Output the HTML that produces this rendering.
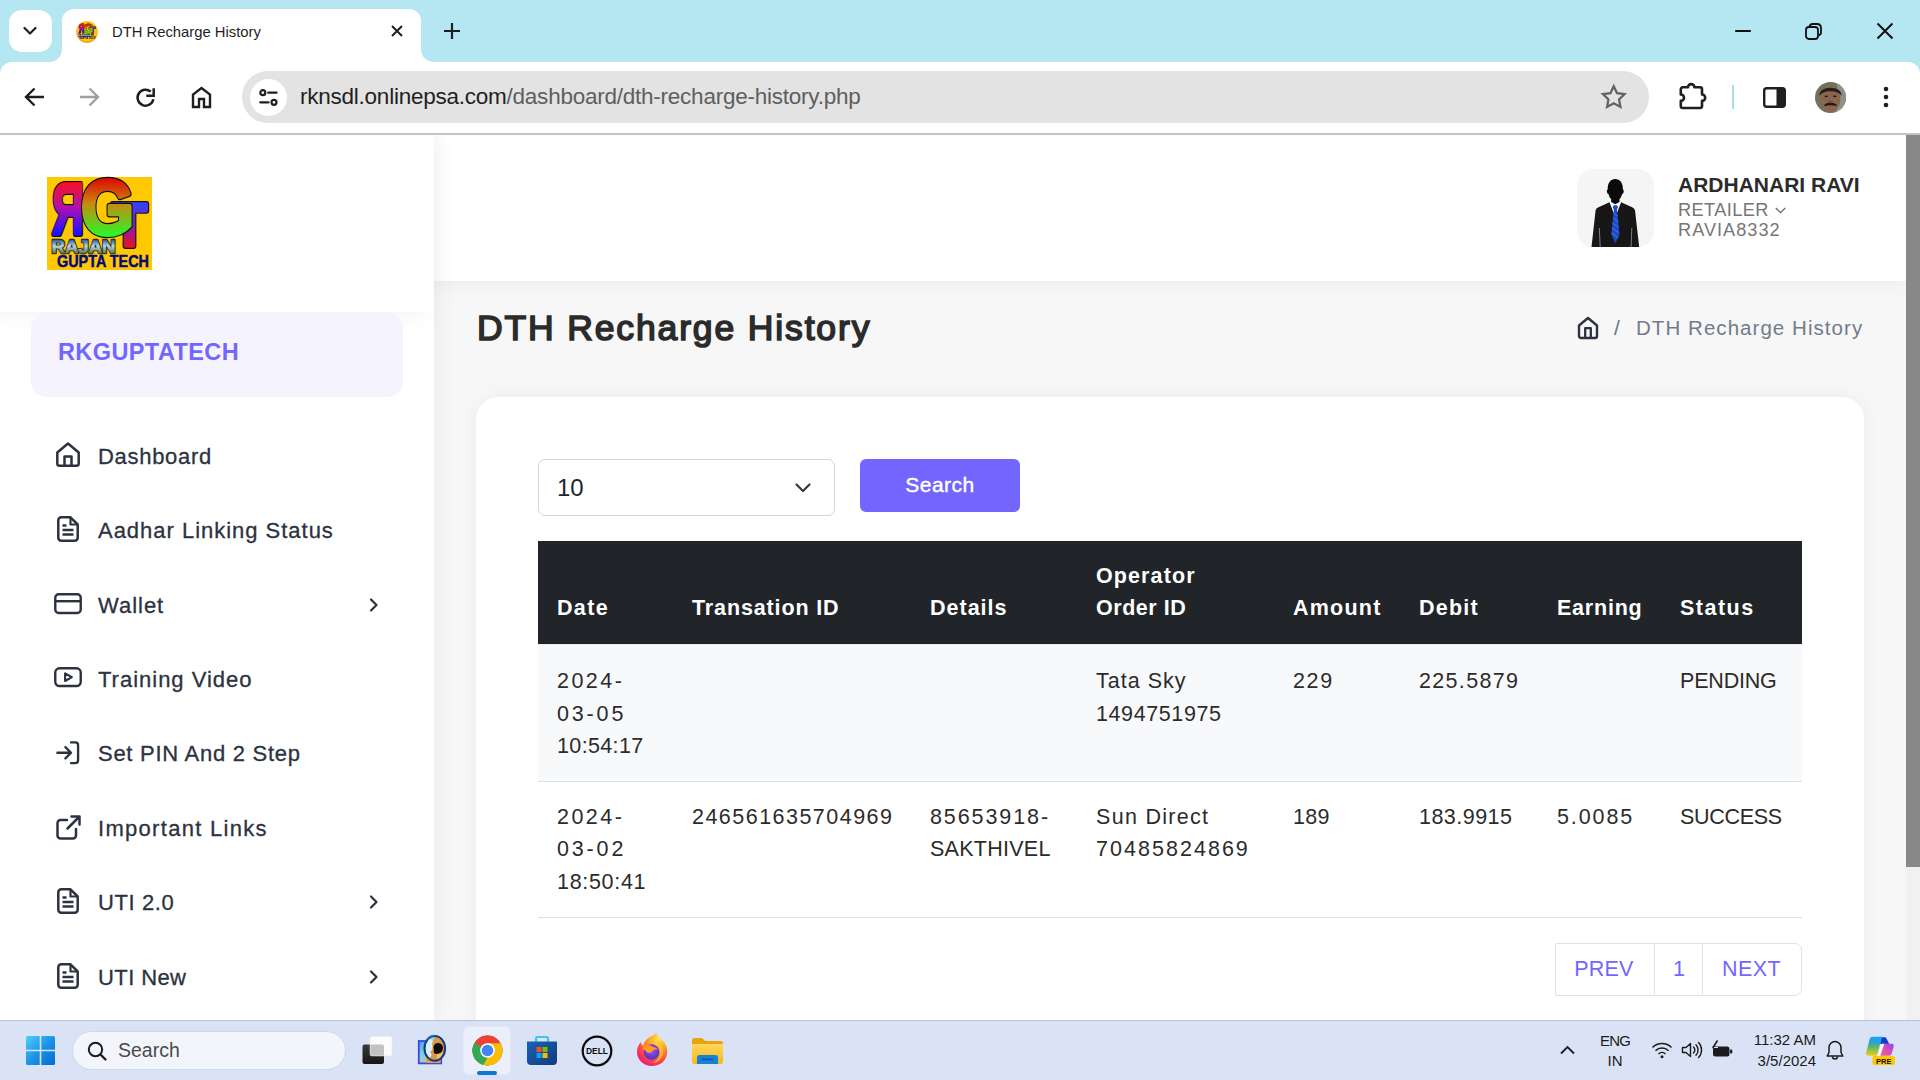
<!DOCTYPE html>
<html lang="en">
<head>
<meta charset="utf-8">
<title>DTH Recharge History</title>
<style>
*{box-sizing:border-box;margin:0;padding:0}
html,body{width:1920px;height:1080px;overflow:hidden;background:#fff;font-family:"Liberation Sans",sans-serif;color:#2b2b2b}
.abs{position:absolute}
svg{display:block;overflow:visible}
/* ---------- browser chrome ---------- */
#tabstrip{position:absolute;left:0;top:0;width:1920px;height:80px;background:#b5e7f3}
#tabsearch{position:absolute;left:9px;top:10px;width:43px;height:42px;border-radius:13px;background:#fff}
#tab{position:absolute;left:62px;top:9px;width:359px;height:53px;background:#fff;border-radius:12px 12px 0 0}
#tab:before,#tab:after{content:"";position:absolute;bottom:0;width:12px;height:12px;background:radial-gradient(circle at 0 0,transparent 11.5px,#fff 12px)}
#tab:before{left:-12px}
#tab:after{right:-12px;background:radial-gradient(circle at 100% 0,transparent 11.5px,#fff 12px)}
#tabtitle{position:absolute;left:50px;top:14.500px;font-size:14.8px;color:#1f1f1f;white-space:nowrap}
#toolbar{position:absolute;left:0;top:62px;width:1920px;height:71px;background:#fff;border-radius:12px 12px 0 0}
#toolbarline{position:absolute;left:0;top:133px;width:1920px;height:1.600px;background:#c4c4c4;z-index:5}
#omni{position:absolute;left:242px;top:71px;width:1407px;height:52px;border-radius:26px;background:#e3e3e3}
#siteinfo{position:absolute;left:250px;top:78.500px;width:37px;height:37px;border-radius:19px;background:#fff}
#url{position:absolute;left:300px;top:84px;font-size:22.500px;line-height:26px;white-space:nowrap;color:#1f1f1f;letter-spacing:-0.24px}
#url span{color:#5e5e5e}
/* ---------- page ---------- */
#page{position:absolute;left:0;top:134px;width:1906px;height:886px;background:#f7f7f7;overflow:hidden}
#sidebar{position:absolute;left:0;top:0;width:434px;height:886px;background:#fff;box-shadow:0 0 21px 0 rgba(89,102,122,.1)}
#logobox{position:absolute;left:0;top:0;width:434px;height:178px;background:#fff;box-shadow:-9px 0 20px rgba(89,102,122,.1)}
#brand{position:absolute;left:31px;top:179px;width:372px;height:84px;border-radius:15px;background:#f5f4fe}
#brand span{position:absolute;left:27px;top:26px;font-size:23.500px;line-height:27px;font-weight:700;color:#7366ff;letter-spacing:.4px;white-space:nowrap}
.mi{position:absolute;left:98px;font-size:22px;line-height:26px;color:#2c323f;white-space:nowrap;letter-spacing:.8px;-webkit-text-stroke:.3px #2c323f}
.ic{position:absolute}
.chev{position:absolute;left:368px}
#header{position:absolute;left:434px;top:0;width:1472px;height:147px;background:#fff;box-shadow:0 0 20px rgba(89,102,122,.1)}
#avatar{position:absolute;left:1143px;top:35px;width:77px;height:78px;border-radius:16px;background:#f5f5f5;overflow:hidden}
#uname{position:absolute;left:1244px;top:39px;font-size:21px;font-weight:700;color:#2b2b2b;white-space:nowrap}
#urole{position:absolute;left:1244px;top:66px;font-size:18.200px;line-height:20px;color:#767676;white-space:nowrap;letter-spacing:.4px}
#uid{position:absolute;left:1244px;top:86px;font-size:18.200px;line-height:20px;color:#767676;white-space:nowrap;letter-spacing:1px}
#ptitle{position:absolute;left:477px;top:174px;font-size:35.500px;font-weight:400;color:#2b2b2b;white-space:nowrap;letter-spacing:1.86px;-webkit-text-stroke:1.600px #2b2b2b}
#crumb{position:absolute;left:1636px;top:182px;font-size:20.500px;color:#727a8c;white-space:nowrap;letter-spacing:1.05px}
#crumbslash{position:absolute;left:1614px;top:182px;font-size:21px;color:#6c757d}
#card{position:absolute;left:476px;top:263px;width:1388px;height:700px;border-radius:22px;background:#fff;box-shadow:0 0 20px rgba(8,21,66,.05)}
#sel{position:absolute;left:538px;top:325px;width:297px;height:57px;border:1.5px solid #ced4da;border-radius:7px;background:#fff}
#sel span{position:absolute;left:18px;top:13.500px;font-size:24px;color:#212529}
#btn{position:absolute;left:860px;top:325px;width:160px;height:53px;border-radius:6px;background:#7366ff;color:#fff;font-size:21px;text-align:center;line-height:51px;letter-spacing:.5px;-webkit-text-stroke:.4px #fff}
#thead{position:absolute;left:538px;top:407px;width:1264px;height:103px;background:#212529}
.th{position:absolute;font-size:21.500px;line-height:26px;font-weight:700;color:#fff;white-space:nowrap}
#row1{position:absolute;left:538px;top:510px;width:1264px;height:138px;background:#f8f9fb;border-top:1px solid #e9edf3;border-bottom:1.5px solid #dee2e6}
#row2{position:absolute;left:538px;top:648px;width:1264px;height:136px;background:#fff;border-bottom:1.5px solid #dee2e6}
.td{position:absolute;font-size:21.500px;line-height:26px;color:#2b2b2b;white-space:nowrap}
#pager{position:absolute;left:1555px;top:809px;width:247px;height:53px;border:1.5px solid #dee2e6;border-radius:0 7px 7px 0;background:#fff}
#pager i{position:absolute;top:0;width:1.200px;height:51px;background:#dee2e6}
#pager span{position:absolute;top:13px;font-size:21.500px;color:#7366ff;letter-spacing:1.6px;white-space:nowrap}
/* ---------- scrollbar ---------- */
#sbar{position:absolute;left:1906px;top:134px;width:14px;height:886px;background:#f1f1f1}
#sthumb{position:absolute;left:0;top:0;width:14px;height:733px;background:#888}
/* ---------- taskbar ---------- */
#taskbar{position:absolute;left:0;top:1020px;width:1920px;height:60px;background:#dae3f6;border-top:1px solid #b9c0d0}
#tsearch{position:absolute;left:72px;top:9.500px;width:274px;height:39px;border-radius:20px;background:#f3f5fc;border:1px solid #cfd6e6}
#tsearch span{position:absolute;left:45px;top:7px;font-size:19.500px;color:#4a4a4a}
.tt{position:absolute;font-size:15px;color:#1b1b1b;white-space:nowrap}
</style>
</head>
<body>
<!-- ======= TAB STRIP ======= -->
<div id="tabstrip">
  <div id="tabsearch"><svg class="abs" style="left:14px;top:16px" width="14" height="10" viewBox="0 0 14 10"><path d="M1.5 2 7 7.5 12.5 2" fill="none" stroke="#1f1f1f" stroke-width="2.2" stroke-linecap="round" stroke-linejoin="round"/></svg></div>
  <div id="tab">
    <svg class="abs" style="left:14px;top:12px" width="22" height="22" viewBox="0 0 22 22"><defs><radialGradient id="fvg" cx=".5" cy=".45" r=".55"><stop offset="0" stop-color="#ffd400"/><stop offset=".8" stop-color="#ffc400"/><stop offset="1" stop-color="#f59a28"/></radialGradient><clipPath id="fvc"><circle cx="11" cy="11" r="10.600"/></clipPath></defs><circle cx="11" cy="11" r="10.900" fill="url(#fvg)"/><g clip-path="url(#fvc)"><use href="#rgt" transform="translate(1.800 2.300) scale(.175)"/></g></svg>
    <div id="tabtitle">DTH Recharge History</div>
    <svg class="abs" style="left:329px;top:16px" width="12" height="12" viewBox="0 0 12 12"><path d="M1 1l10 10M11 1 1 11" stroke="#1f1f1f" stroke-width="2" stroke-linecap="butt"/></svg>
  </div>
  <svg class="abs" style="left:444px;top:23px" width="16" height="16" viewBox="0 0 16 16"><path d="M8 0v16M0 8h16" stroke="#1f1f1f" stroke-width="2.2"/></svg>
  <svg class="abs" style="left:1735px;top:30px" width="16" height="2" viewBox="0 0 16 2"><rect width="16" height="2" rx=".8" fill="#111"/></svg>
  <svg class="abs" style="left:1805px;top:23px" width="17" height="17" viewBox="0 0 17 17"><rect x="1" y="4" width="12" height="12" rx="3" fill="none" stroke="#111" stroke-width="1.8"/><path d="M4.5 3.5C5 1.8 6 1 7.5 1H12c2.5 0 4 1.500 4 4v4.500c0 1.500-.8 2.500-2.500 3" fill="none" stroke="#111" stroke-width="1.8"/></svg>
  <svg class="abs" style="left:1877px;top:23px" width="16" height="16" viewBox="0 0 16 16"><path d="M0.500 .5l15 15M15.500 .5l-15 15" stroke="#111" stroke-width="2"/></svg>
</div>
<!-- ======= TOOLBAR ======= -->
<div id="toolbar"></div>
<div id="toolbarline"></div>
<svg class="abs" style="left:24px;top:87px" width="21" height="20" viewBox="0 0 21 20"><path d="M20 10H3M10.500 1.500 2 10l8.500 8.500" fill="none" stroke="#1f1f1f" stroke-width="2.4"/></svg>
<svg class="abs" style="left:79px;top:87px" width="21" height="20" viewBox="0 0 21 20"><path d="M1 10h17M10.500 1.500 19 10l-8.500 8.500" fill="none" stroke="#a0a0a0" stroke-width="2.4"/></svg>
<svg class="abs" style="left:135px;top:87px" width="21" height="21" viewBox="0 0 21 21"><path d="M18.400 12.300a8 8 0 1 1-2.600-7.700" fill="none" stroke="#1f1f1f" stroke-width="2.500"/><path d="M18.700 1.300v7.400h-7.400" fill="none" stroke="#1f1f1f" stroke-width="2.500"/></svg>
<svg class="abs" style="left:191px;top:86px" width="21" height="22" viewBox="0 0 21 22"><path d="M2 21V8.500L10.500 2 19 8.500V21h-6v-8H8v8z" fill="none" stroke="#1f1f1f" stroke-width="2.400" stroke-linejoin="miter"/></svg>
<div id="omni"></div>
<div id="siteinfo"><svg class="abs" style="left:8px;top:9px" width="22" height="19" viewBox="0 0 22 19"><circle cx="4.800" cy="4.700" r="2.500" fill="none" stroke="#1f1f1f" stroke-width="2.200"/><path d="M10.300 4.700h8.200" stroke="#1f1f1f" stroke-width="2.300" stroke-linecap="round"/><path d="M2.300 14.300h8.200" stroke="#1f1f1f" stroke-width="2.300" stroke-linecap="round"/><circle cx="16" cy="14.300" r="2.500" fill="none" stroke="#1f1f1f" stroke-width="2.200"/></svg></div>
<div id="url">rknsdl.onlinepsa.com<span>/dashboard/dth-recharge-history.php</span></div>
<svg class="abs" style="left:1600.500px;top:84px" width="25.500" height="24.500" viewBox="0 0 24 23"><path d="M12 2l3.100 6.600 7.100.900-5.200 5 1.300 7.100L12 18.100 5.700 21.600 7 14.500 1.800 9.500l7.100-.9z" fill="none" stroke="#5f6368" stroke-width="2.100" stroke-linejoin="miter"/></svg>
<svg class="abs" style="left:1679px;top:83px" width="28" height="27" viewBox="0 0 28 27"><path d="M1.800 6.300a2 2 0 0 1 2-2H9a3.200 3.200 0 0 1 6.400 0H21a2 2 0 0 1 2 2v5.200a3.200 3.200 0 0 1 0 6.400V23a2 2 0 0 1-2 2H3.800a2 2 0 0 1-2-2v-5.100a3.200 3.200 0 0 0 0-6.400z" fill="none" stroke="#1f1f1f" stroke-width="2.600" stroke-linejoin="round"/></svg>
<div class="abs" style="left:1732px;top:85px;width:2px;height:24px;background:#a8dcea"></div>
<svg class="abs" style="left:1763px;top:87px" width="23" height="21" viewBox="0 0 23 21"><rect x="1.200" y="1.200" width="20.600" height="18.600" rx="2.500" fill="none" stroke="#1f1f1f" stroke-width="2.400"/><rect x="13.500" y="1" width="8.500" height="19" fill="#1f1f1f"/></svg>
<svg class="abs" style="left:1815px;top:82px" width="31" height="31" viewBox="0 0 31 31"><defs><clipPath id="avc"><circle cx="15.500" cy="15.500" r="15.500"/></clipPath></defs><g clip-path="url(#avc)"><rect width="31" height="31" fill="#6f725f"/><rect x="22" y="0" width="9" height="31" fill="#8d9388"/><ellipse cx="15.500" cy="17" rx="10" ry="13.500" fill="#8a6650"/><path d="M4.500 14C3 3 28 3 26.500 14 24 7.500 7 7.500 4.500 14z" fill="#26201c"/><ellipse cx="11.300" cy="14.300" rx="1.800" ry=".9" fill="#2a1c16"/><ellipse cx="19.700" cy="14.300" rx="1.800" ry=".9" fill="#2a1c16"/><path d="M9.500 23.500c2-3 10-3 12 0-2-1.200-10-1.200-12 0z" fill="#1e1612" stroke="#1e1612" stroke-width="1.200"/><path d="M13 19.500h5" stroke="#6a4a38" stroke-width="1"/><path d="M20 31c1-3 5-4 9-3v3z" fill="#c8c8d0"/></g></svg>
<svg class="abs" style="left:1883px;top:86px" width="6" height="22" viewBox="0 0 6 22"><circle cx="3" cy="3" r="2.300" fill="#1f1f1f"/><circle cx="3" cy="11" r="2.300" fill="#1f1f1f"/><circle cx="3" cy="19" r="2.300" fill="#1f1f1f"/></svg>

<!-- ======= PAGE ======= -->
<div id="page">
  <!-- header -->
  <div id="header">
    <div id="avatar">
      <svg class="abs" style="left:0;top:0" width="77" height="78" viewBox="0 0 77 78">
        <path d="M33.500 33.500 38.300 32l4.800 1.500 1 8-5.800 8-5.800-8z" fill="#fff"/>
        <path d="M14.500 78 18.500 42c.3-2 1.500-3.300 3.500-4l10.500-4.800 5.800 15 5.800-15L54.600 38c2 .7 3.200 2 3.500 4L62.200 78z" fill="#171717"/>
        <path d="M30.700 20.500c-.2-6.500 3-10.500 7.600-10.500s7.800 4 7.600 10.500c.8.200 1 1.200.7 2.500-.3 1.400-.9 2.200-1.600 2.200-.5 2.300-1.400 3.800-2.500 4.800V33l-4.200 2.200L34.100 33v-3c-1.100-1-2-2.500-2.500-4.800-.7 0-1.300-.8-1.600-2.200-.3-1.300-.1-2.300.7-2.500z" fill="#0a0a0a"/>
        <path d="M36.700 36.300h3.400l1 2.200-1.200 2 2.600 25-4.100 8.700-4.100-8.700 2.600-25-1.200-2z" fill="#1d4bc9"/>
        <path d="M36.300 44l4.500 3M35.800 49l5.500 3.600M35.300 54l6.500 4.200M34.800 59l7.300 4.800M34.500 64l6.800 4.500" stroke="#4a7af0" stroke-width=".9"/>
        <path d="M22.300 59l.9 19M54.800 59l-.7 19" stroke="#9a9a9a" stroke-width="1" opacity=".8"/>
      </svg>
    </div>
    <div id="uname">ARDHANARI RAVI</div>
    <div id="urole">RETAILER <svg style="display:inline-block;vertical-align:2px;margin-left:1px" width="11" height="7" viewBox="0 0 11 7"><path d="M.8 1l4.700 4.600L10.200 1" fill="none" stroke="#6a6a6a" stroke-width="1.300"/></svg></div>
    <div id="uid">RAVIA8332</div>
  </div>
  <!-- body -->
  <div id="ptitle">DTH Recharge History</div>
  <svg class="abs" style="left:1577px;top:182px" width="22" height="24" viewBox="0 0 22 24"><path d="M2 9.500 11 2l9 7.500V20a2 2 0 0 1-2 2H4a2 2 0 0 1-2-2z" fill="none" stroke="#2c323f" stroke-width="2.400" stroke-linejoin="round"/><path d="M8.200 22v-9.800h5.600V22" fill="none" stroke="#2c323f" stroke-width="2.300" stroke-linejoin="round"/></svg>
  <div id="crumbslash">/</div>
  <div id="crumb">DTH Recharge History</div>
  <div id="card"></div>
  <div id="sel"><span>10</span><svg class="abs" style="left:256px;top:23px" width="16" height="10" viewBox="0 0 16 10"><path d="M1.500 1.500 8 8l6.500-6.500" fill="none" stroke="#343a40" stroke-width="2.200" stroke-linecap="round" stroke-linejoin="round"/></svg></div>
  <div id="btn">Search</div>
  <div id="thead"></div>
  <div id="row1"></div>
  <div id="row2"></div>
  <div class="th" style="left:557px;top:460.5px;letter-spacing:1.33px">Date</div>
  <div class="th" style="left:692px;top:460.5px;letter-spacing:0.87px">Transation ID</div>
  <div class="th" style="left:930px;top:460.5px;letter-spacing:1.00px">Details</div>
  <div class="th" style="left:1096px;top:428.5px;letter-spacing:1.10px">Operator</div>
  <div class="th" style="left:1096px;top:460.5px;letter-spacing:0.52px">Order ID</div>
  <div class="th" style="left:1293px;top:460.5px;letter-spacing:1.22px">Amount</div>
  <div class="th" style="left:1419px;top:460.5px;letter-spacing:1.21px">Debit</div>
  <div class="th" style="left:1557px;top:460.5px;letter-spacing:0.78px">Earning</div>
  <div class="th" style="left:1680px;top:460.5px;letter-spacing:1.50px">Status</div>
  <div class="td" style="left:557px;top:533.5px;letter-spacing:2.48px">2024-</div>
  <div class="td" style="left:557px;top:567px;letter-spacing:2.85px">03-05</div>
  <div class="td" style="left:557px;top:598.5px;letter-spacing:0.36px">10:54:17</div>
  <div class="td" style="left:1096px;top:533.5px;letter-spacing:1.02px">Tata Sky</div>
  <div class="td" style="left:1096px;top:567px;letter-spacing:0.60px">1494751975</div>
  <div class="td" style="left:1293px;top:533.5px;letter-spacing:1.66px">229</div>
  <div class="td" style="left:1419px;top:533.5px;letter-spacing:1.33px">225.5879</div>
  <div class="td" style="left:1680px;top:533.5px;letter-spacing:-0.19px">PENDING</div>
  <div class="td" style="left:557px;top:669.5px;letter-spacing:2.48px">2024-</div>
  <div class="td" style="left:557px;top:702px;letter-spacing:2.85px">03-02</div>
  <div class="td" style="left:557px;top:734.5px;letter-spacing:0.69px">18:50:41</div>
  <div class="td" style="left:692px;top:669.5px;letter-spacing:1.47px">246561635704969</div>
  <div class="td" style="left:930px;top:669.5px;letter-spacing:1.91px">85653918-</div>
  <div class="td" style="left:930px;top:702px;letter-spacing:0.26px">SAKTHIVEL</div>
  <div class="td" style="left:1096px;top:669.5px;letter-spacing:1.29px">Sun Direct</div>
  <div class="td" style="left:1096px;top:702px;letter-spacing:2.03px">70485824869</div>
  <div class="td" style="left:1293px;top:669.5px;letter-spacing:0.26px">189</div>
  <div class="td" style="left:1419px;top:669.5px;letter-spacing:0.47px">183.9915</div>
  <div class="td" style="left:1557px;top:669.5px;letter-spacing:1.89px">5.0085</div>
  <div class="td" style="left:1680px;top:669.5px;letter-spacing:-0.31px">SUCCESS</div>
  <div id="pager"><i style="left:98px"></i><i style="left:146px"></i><span style="left:18.200px;letter-spacing:.2px">PREV</span><span style="left:117px">1</span><span style="left:166px;letter-spacing:.4px">NEXT</span></div>

  <!-- sidebar -->
  <div id="sidebar">
    <div id="logobox">
      <svg class="abs" style="left:47px;top:43px" width="105" height="93" viewBox="0 0 105 93">
        <defs>
          <linearGradient id="gR" gradientUnits="userSpaceOnUse" x1="0" y1="4" x2="0" y2="57"><stop offset="0" stop-color="#ff1018"/><stop offset=".5" stop-color="#b010b0"/><stop offset="1" stop-color="#1a10ff"/></linearGradient>
          <linearGradient id="gG" gradientUnits="userSpaceOnUse" x1="0" y1="0" x2="0" y2="59"><stop offset="0" stop-color="#e00000"/><stop offset=".45" stop-color="#c88a10"/><stop offset="1" stop-color="#28f828"/></linearGradient>
          <linearGradient id="gT" gradientUnits="userSpaceOnUse" x1="0" y1="24" x2="0" y2="70"><stop offset="0" stop-color="#2a48ff"/><stop offset=".5" stop-color="#7a20c0"/><stop offset="1" stop-color="#e81028"/></linearGradient>
          <linearGradient id="gJ" gradientUnits="userSpaceOnUse" x1="0" y1="62" x2="0" y2="76"><stop offset="0" stop-color="#1a4a8a"/><stop offset=".5" stop-color="#b8d8f0"/><stop offset="1" stop-color="#6a7a40"/></linearGradient>
        </defs>
        <rect width="105" height="93" fill="#ffc800"/>
        <g id="rgt" font-family="Liberation Sans, sans-serif" font-weight="700" stroke-linejoin="round">
          <g transform="translate(37 0) scale(-1 1)"><text x="0" y="56.500" font-size="72" textLength="32" lengthAdjust="spacingAndGlyphs" fill="#111" stroke="#111" stroke-width="6">R</text><text x="0" y="56.500" font-size="72" textLength="32" lengthAdjust="spacingAndGlyphs" fill="url(#gR)" stroke="url(#gR)" stroke-width="3.400">R</text></g>
          <text x="65" y="69" font-size="62" textLength="35" lengthAdjust="spacingAndGlyphs" fill="#111" stroke="#111" stroke-width="6">T</text><text x="65" y="69" font-size="62" textLength="35" lengthAdjust="spacingAndGlyphs" fill="url(#gT)" stroke="url(#gT)" stroke-width="3.600">T</text>
          <text x="34" y="57" font-size="78" textLength="53" lengthAdjust="spacingAndGlyphs" fill="#111" stroke="#111" stroke-width="6.500">G</text><text x="34" y="57" font-size="78" textLength="53" lengthAdjust="spacingAndGlyphs" fill="url(#gG)" stroke="url(#gG)" stroke-width="4">G</text>
          <text x="4.500" y="75.500" font-size="18" textLength="64" lengthAdjust="spacingAndGlyphs" fill="#111" stroke="#111" stroke-width="2.400">RAJAN</text><text x="4.500" y="75.500" font-size="18" textLength="64" lengthAdjust="spacingAndGlyphs" fill="url(#gJ)" stroke="url(#gJ)" stroke-width=".8">RAJAN</text>
          <text x="10" y="90" font-size="16.500" fill="#080878" stroke="#080878" stroke-width=".5" textLength="92" lengthAdjust="spacingAndGlyphs">GUPTA TECH</text>
        </g>
      </svg>
    </div>
    <div id="brand"><span>RKGUPTATECH</span></div>

    <svg class="ic" style="left:56px;top:308px" width="24" height="25" viewBox="0 0 24 25"><path d="M1.300 10.500 12 1.500l10.700 9v11a2.300 2.300 0 0 1-2.300 2.300H3.600a2.300 2.300 0 0 1-2.300-2.300z" fill="none" stroke="#2c323f" stroke-width="2.500" stroke-linejoin="round"/><path d="M8.500 23.500v-9h7v9" fill="none" stroke="#2c323f" stroke-width="2.500" stroke-linejoin="round"/></svg>
    <div class="mi" style="top:310px;letter-spacing:0.7px">Dashboard</div>

    <svg class="ic docic" style="left:57px;top:382px" width="22" height="26" viewBox="0 0 22 26"><use href="#doc"/></svg>
    <div class="mi" style="top:384px;letter-spacing:0.98px">Aadhar Linking Status</div>

    <svg class="ic" style="left:54px;top:458.500px" width="28" height="22.200" viewBox="0 0 29 23"><rect x="1.300" y="1.300" width="26.400" height="19.400" rx="3.500" fill="none" stroke="#2c323f" stroke-width="2.500"/><path d="M1.500 8.500h26" stroke="#2c323f" stroke-width="2.500"/></svg>
    <div class="mi" style="top:459px;letter-spacing:0.98px">Wallet</div>
    <svg class="chev" style="top:463px" width="12" height="16" viewBox="0 0 12 16"><path d="M3 2.500 8.500 8 3 13.500" fill="none" stroke="#2c323f" stroke-width="2.200" stroke-linecap="round" stroke-linejoin="round"/></svg>

    <svg class="ic" style="left:54px;top:533px" width="28" height="21.300" viewBox="0 0 29 22"><rect x="1.300" y="1.300" width="26.400" height="18.400" rx="4.500" fill="none" stroke="#2c323f" stroke-width="2.500"/><path d="M11.500 6.500v8l7-4z" fill="none" stroke="#2c323f" stroke-width="2.200" stroke-linejoin="round"/></svg>
    <div class="mi" style="top:533px;letter-spacing:0.99px">Training Video</div>

    <svg class="ic" style="left:56px;top:606.500px" width="23.500" height="23.500" viewBox="0 0 25 25"><path d="M1.500 12.500h14M10 6.500l6 6-6 6" fill="none" stroke="#2c323f" stroke-width="2.500" stroke-linecap="round" stroke-linejoin="round"/><path d="M16 1.500h4.500a3 3 0 0 1 3 3v16a3 3 0 0 1-3 3H16" fill="none" stroke="#2c323f" stroke-width="2.500" stroke-linecap="round" stroke-linejoin="round"/></svg>
    <div class="mi" style="top:607px;letter-spacing:0.73px">Set PIN And 2 Step</div>

    <svg class="ic" style="left:56px;top:681px" width="25" height="25" viewBox="0 0 25 25"><path d="M20 14v6.500a3 3 0 0 1-3 3H4.500a3 3 0 0 1-3-3V8a3 3 0 0 1 3-3H11" fill="none" stroke="#2c323f" stroke-width="2.500" stroke-linecap="round" stroke-linejoin="round"/><path d="M15.500 1.500h8v8M23 2 11.500 13.500" fill="none" stroke="#2c323f" stroke-width="2.500" stroke-linecap="round" stroke-linejoin="round"/></svg>
    <div class="mi" style="top:682px;letter-spacing:1.3px">Important Links</div>

    <svg class="ic docic" style="left:57px;top:754px" width="22" height="26" viewBox="0 0 22 26"><use href="#doc"/></svg>
    <div class="mi" style="top:756px;letter-spacing:0.6px">UTI 2.0</div>
    <svg class="chev" style="top:760px" width="12" height="16" viewBox="0 0 12 16"><path d="M3 2.500 8.500 8 3 13.500" fill="none" stroke="#2c323f" stroke-width="2.200" stroke-linecap="round" stroke-linejoin="round"/></svg>

    <svg class="ic docic" style="left:57px;top:829px" width="22" height="26" viewBox="0 0 22 26"><use href="#doc"/></svg>
    <div class="mi" style="top:831px;letter-spacing:0.4px">UTI New</div>
    <svg class="chev" style="top:835px" width="12" height="16" viewBox="0 0 12 16"><path d="M3 2.500 8.500 8 3 13.500" fill="none" stroke="#2c323f" stroke-width="2.200" stroke-linecap="round" stroke-linejoin="round"/></svg>
  </div>
  <svg width="0" height="0" style="position:absolute"><defs><g id="doc"><path d="M13.500 1.300H4.300a3 3 0 0 0-3 3v17.400a3 3 0 0 0 3 3h13.400a3 3 0 0 0 3-3V8.500z" fill="none" stroke="#2c323f" stroke-width="2.500" stroke-linejoin="round"/><path d="M13.500 1.300v7.200h7.200" fill="none" stroke="#2c323f" stroke-width="2.200" stroke-linejoin="round"/><path d="M5.500 9.500h4M5.500 14h11M5.500 18.500h11" stroke="#2c323f" stroke-width="2.300"/></g></defs></svg>
</div>

<!-- ======= SCROLLBAR ======= -->
<div id="sbar"><div id="sthumb"></div></div>

<!-- ======= TASKBAR ======= -->
<div id="taskbar">
  <!-- windows logo -->
  <svg class="abs" style="left:26px;top:15px" width="29" height="29" viewBox="0 0 29 29"><defs><linearGradient id="wg" x1="0" y1="0" x2="1" y2="1"><stop offset="0" stop-color="#4fd0fb"/><stop offset=".5" stop-color="#1b94e6"/><stop offset="1" stop-color="#0669cc"/></linearGradient></defs><path d="M0 1.500A1.500 1.500 0 0 1 1.500 0H13.700V13.700H0zM15.300 0H27.500A1.500 1.500 0 0 1 29 1.500V13.700H15.300zM0 15.300H13.700V29H1.500A1.500 1.500 0 0 1 0 27.500zM15.300 15.300H29V27.500A1.500 1.500 0 0 1 27.500 29H15.300z" fill="url(#wg)"/></svg>
  <div id="tsearch"><svg class="abs" style="left:14px;top:9px" width="20" height="20" viewBox="0 0 20 20"><circle cx="8.500" cy="8.500" r="6.700" fill="none" stroke="#1b1b1b" stroke-width="2"/><path d="M13.500 13.500 18.500 18.500" stroke="#1b1b1b" stroke-width="2.400" stroke-linecap="round"/></svg><span>Search</span></div>
  <!-- task view -->
  <svg class="abs" style="left:362px;top:15px" width="31" height="29" viewBox="0 0 31 29"><defs><linearGradient id="tv1" x1="0" y1="0" x2="0" y2="1"><stop offset="0" stop-color="#3a3a3a"/><stop offset="1" stop-color="#151515"/></linearGradient></defs><rect x="0.500" y="8.500" width="21.500" height="19.500" rx="2" fill="url(#tv1)"/><rect x="8" y="0.500" width="22" height="19.500" rx="2" fill="#fcfcfc" stroke="#e8ebf2" stroke-width=".5"/><path d="M8.300 8.500H20a2 2 0 0 1 2 2V19.700H10.300a2 2 0 0 1-2-2z" fill="#c2c2c2"/></svg>
  <!-- photo app -->
  <svg class="abs" style="left:417px;top:13px" width="31" height="32" viewBox="0 0 31 32"><defs><clipPath id="pr"><ellipse cx="17.800" cy="14.400" rx="10" ry="12"/></clipPath><linearGradient id="psky" x1="0" y1="0" x2="0" y2="1"><stop offset="0" stop-color="#48a8e0"/><stop offset=".6" stop-color="#7fd0e8"/><stop offset="1" stop-color="#b8c8b0"/></linearGradient></defs><rect x="1.800" y="7" width="22.400" height="22.400" fill="url(#psky)" stroke="#3a48e0" stroke-width="1.800"/><path d="M9 29V22l8-4h6.500v11z" fill="#e0a048"/><g clip-path="url(#pr)"><rect x="6" y="0" width="24" height="28" fill="#8fd8f0"/><path d="M9 6c3-2 6-1 8 2l-2 20H8z" fill="#d8f0f8"/><path d="M19 1c6 1 10 6 10 13s-4 12-11 12c-3 0-5-1-6-2 3-2 3-4 1-6 3-2 3-5 2-8 1-3 2-6 4-9z" fill="#d89a4a"/><path d="M18 10c3-2 7-1 8 3 0 4-2 7-6 7-3 0-4-2-3-4-1-2-1-4 1-6z" fill="#140c08"/><path d="M20 20c3 0 5-1 6-3 0 4-2 7-6 8z" fill="#f0c070"/></g><ellipse cx="17.800" cy="14.400" rx="10.300" ry="12.300" fill="none" stroke="#123a7c" stroke-width="2"/><path d="M9 6.500a10.300 12.300 0 0 1 8.800-5.200" fill="none" stroke="#3a78c8" stroke-width="1.200"/></svg>
  <!-- chrome highlight -->
  <div class="abs" style="left:463px;top:5px;width:48px;height:49px;border-radius:6px;background:#eaeffb;border:1px solid #e3e8f4"></div>
  <div class="abs" style="left:477px;top:50px;width:20px;height:4px;border-radius:2px;background:#0a78d4"></div>
  <svg class="abs" style="left:471.500px;top:14px" width="31" height="31" viewBox="0 0 32 32"><defs><clipPath id="cc"><circle cx="16" cy="16" r="15.500"/></clipPath></defs><g clip-path="url(#cc)"><rect width="32" height="32" fill="#ea4335"/><path d="M16 16 2.200 8-4 20 10 40z" fill="#34a853"/><path d="M16 16 9 28.200 14 40 40 40 40 16z" fill="#34a853"/><path d="M16 16h20v24H8z" fill="#fbbc04"/><path d="M16 16 2.600 8.200 0 16 4 28 9.100 28z" fill="#34a853"/><path d="M2.600 8.200 16 16l0-7.500 14-.3L24 -2 6 0z" fill="#ea4335"/><path d="M16 8.500h14.500L36 20 22 36l-13 .0L16 23.500z" fill="#fbbc04"/><path d="M9.500 12.200 2.600 8.200-2 18 6 32l3 4 7-12.500z" fill="#34a853"/></g><circle cx="16" cy="16" r="7.600" fill="#fff"/><circle cx="16" cy="16" r="6" fill="#4285f4"/></svg>
  <!-- store -->
  <svg class="abs" style="left:527px;top:14px" width="30" height="31" viewBox="0 0 30 31"><defs><linearGradient id="sg" x1="0" y1="0" x2="1" y2="1"><stop offset="0" stop-color="#1763b8"/><stop offset="1" stop-color="#163a78"/></linearGradient></defs><path d="M9 7V3.500A1.500 1.500 0 0 1 10.500 2h9A1.500 1.500 0 0 1 21 3.500V7" fill="none" stroke="#3fc2f5" stroke-width="2.200"/><path d="M0 6.500h30V26a4 4 0 0 1-4 4H4a4 4 0 0 1-4-4z" fill="url(#sg)"/><rect x="9.500" y="12" width="5" height="5" fill="#f25022"/><rect x="15.500" y="12" width="5" height="5" fill="#7fba00"/><rect x="9.500" y="18" width="5" height="5" fill="#00a4ef"/><rect x="15.500" y="18" width="5" height="5" fill="#ffb900"/></svg>
  <!-- dell -->
  <svg class="abs" style="left:581px;top:14px" width="32" height="32" viewBox="0 0 32 32"><circle cx="16" cy="16" r="14.300" fill="none" stroke="#0b0b0b" stroke-width="2.200"/><text x="16" y="19.300" text-anchor="middle" font-family="Liberation Sans, sans-serif" font-weight="700" font-size="9" fill="#0b0b0b" textLength="22" lengthAdjust="spacingAndGlyphs">DELL</text></svg>
  <!-- firefox -->
  <svg class="abs" style="left:636px;top:12px" width="32" height="34" viewBox="0 0 32 34"><defs><radialGradient id="fg" cx=".7" cy=".2" r=".9"><stop offset="0" stop-color="#ffe94a"/><stop offset=".35" stop-color="#ffa21f"/><stop offset=".7" stop-color="#ff4a3d"/><stop offset="1" stop-color="#e31587"/></radialGradient><radialGradient id="fp" cx=".5" cy=".4" r=".6"><stop offset="0" stop-color="#9059ff"/><stop offset="1" stop-color="#5b2bbd"/></radialGradient></defs><path d="M16 3c2-1 3-2 4-3 1 3 4 5 6 7 4 4 6 8 5 14-1 7-7 12-15 12S1 27 1 19c0-5 2-8 4-10 0 2 1 3 2 4 1-4 4-8 9-10z" fill="url(#fg)"/><circle cx="15.500" cy="19" r="7.800" fill="url(#fp)"/><path d="M8 13c3-2 7-1 9 1 2 0 4 1 5 3-3-1-5 0-6 2-2 2-6 1-7-2-2 0-3-2-1-4z" fill="#ff9a2a"/><path d="M21 7c3 2 6 6 6 12 0 6-5 11-11 11 6-2 9-7 8-13-1-4-2-7-3-10z" fill="#ffbd3a" opacity=".9"/></svg>
  <!-- explorer -->
  <svg class="abs" style="left:692px;top:16px" width="31" height="28" viewBox="0 0 31 28"><defs><linearGradient id="eg" x1="0" y1="0" x2="0" y2="1"><stop offset="0" stop-color="#ffd75a"/><stop offset="1" stop-color="#f4b81c"/></linearGradient></defs><path d="M0 3.500A2.500 2.500 0 0 1 2.500 1H10l3 3h15.500A2.500 2.500 0 0 1 31 6.500V10H0z" fill="#e8a410"/><path d="M0 7h31v17.500a2.500 2.500 0 0 1-2.500 2.500h-26A2.500 2.500 0 0 1 0 24.500z" fill="url(#eg)"/><path d="M5 27v-6.500A2.500 2.500 0 0 1 7.500 18h16a2.500 2.500 0 0 1 2.500 2.500V27z" fill="#1582d8"/><rect x="9.500" y="21.500" width="12" height="1.800" rx=".9" fill="#0c5aa8"/></svg>
  <!-- tray -->
  <svg class="abs" style="left:1560px;top:24px" width="15" height="10" viewBox="0 0 15 10"><path d="M1 8.500 7.500 2 14 8.500" fill="none" stroke="#1b1b1b" stroke-width="1.800"/></svg>
  <div class="tt" style="left:1600px;top:11px;width:30px;text-align:center;letter-spacing:-.9px">ENG</div>
  <div class="tt" style="left:1600px;top:31px;width:30px;text-align:center">IN</div>
  <svg class="abs" style="left:1651px;top:20px" width="22" height="18" viewBox="0 0 22 18"><path d="M1.500 6.500a13.500 13.500 0 0 1 19 0" fill="none" stroke="#1b1b1b" stroke-width="1.500"/><path d="M4.500 9.800a9.200 9.200 0 0 1 13 0" fill="none" stroke="#1b1b1b" stroke-width="1.500"/><path d="M7.500 13a5 5 0 0 1 7 0" fill="none" stroke="#1b1b1b" stroke-width="1.500"/><circle cx="11" cy="15.800" r="1.500" fill="#1b1b1b"/></svg>
  <svg class="abs" style="left:1681px;top:20px" width="22" height="18" viewBox="0 0 22 18"><path d="M1.500 6.500h3.500l4.500-4v13l-4.500-4H1.500z" fill="none" stroke="#1b1b1b" stroke-width="1.400" stroke-linejoin="round"/><path d="M12.500 6a4.500 4.500 0 0 1 0 6M15 3.800a7.600 7.600 0 0 1 0 10.400M17.600 1.500a11 11 0 0 1 0 15" fill="none" stroke="#1b1b1b" stroke-width="1.400" stroke-linecap="round"/></svg>
  <svg class="abs" style="left:1711px;top:19px" width="22" height="18" viewBox="0 0 22 18"><rect x="2" y="6.500" width="16.500" height="10" rx="2.500" fill="#1b1b1b"/><rect x="19" y="9.500" width="2.300" height="4" rx="1" fill="#1b1b1b"/><path d="M6.500 0.500 2 7.500h3.500L4 12" fill="none" stroke="#1b1b1b" stroke-width="1.600" stroke-linejoin="round"/><path d="M3 7.500h4" stroke="#dae3f6" stroke-width="1"/></svg>
  <div class="tt" style="left:1716px;top:10px;width:100px;text-align:right">11:32 AM</div>
  <div class="tt" style="left:1716px;top:31px;width:100px;text-align:right">3/5/2024</div>
  <svg class="abs" style="left:1826px;top:19px" width="18" height="21" viewBox="0 0 18 21"><path d="M9 1.500a6 6 0 0 1 6 6v5l1.800 3.500H1.200L3 12.500v-5a6 6 0 0 1 6-6z" fill="none" stroke="#1b1b1b" stroke-width="1.500" stroke-linejoin="round"/><path d="M6.500 16.500a2.500 2.500 0 0 0 5 0" fill="none" stroke="#1b1b1b" stroke-width="1.500"/></svg>
  <!-- copilot -->
  <svg class="abs" style="left:1865px;top:14px" width="32" height="32" viewBox="0 0 32 32"><defs><linearGradient id="cp1" x1="0" y1="0" x2="0" y2="1"><stop offset="0" stop-color="#18a4f4"/><stop offset=".3" stop-color="#2aa0d8"/><stop offset=".55" stop-color="#62b862"/><stop offset="1" stop-color="#f0cc18"/></linearGradient><linearGradient id="cp2" x1="1" y1="0" x2="0" y2="1"><stop offset="0" stop-color="#9a3cf8"/><stop offset=".5" stop-color="#d452b8"/><stop offset="1" stop-color="#f8607a"/></linearGradient></defs><path d="M15.800 2.200h4c.8 0 1.300.4 1.700 1.200L24.200 9h-9z" fill="#0f3ed0"/><path d="M7.800 1.800h9.300L12.400 19c-.4 1.200-1 1.700-2.200 1.700H3.500c-2 0-2.800-1.200-2.300-3.200L4.500 4.500C5 2.600 6 1.800 7.800 1.800z" fill="url(#cp1)"/><path d="M16.800 8.800h2.900l-4 11.700h-3.400z" fill="#fff"/><path d="M19.300 8.800h7c2 0 2.800 1.200 2.300 3L26.800 18.200c-.6 1.800-1.500 2.500-3.300 2.500H15.300z" fill="url(#cp2)"/><rect x="7.400" y="21" width="22.600" height="9" rx="2" fill="#ffc800"/><text x="18.700" y="28.600" text-anchor="middle" font-family="Liberation Sans, sans-serif" font-weight="700" font-size="7.600" fill="#151515" textLength="15.500" lengthAdjust="spacingAndGlyphs">PRE</text></svg>
</div>
</body>
</html>
